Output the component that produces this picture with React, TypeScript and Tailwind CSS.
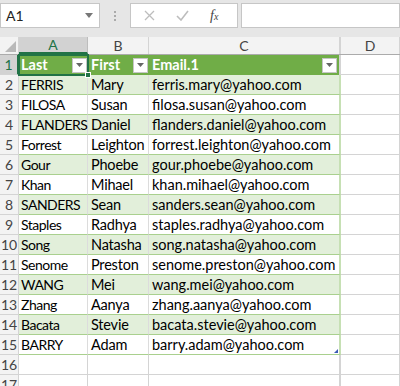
import React from 'react';

const rows: [string, string, string][] = [
  ['FERRIS', 'Mary', 'ferris.mary@yahoo.com'],
  ['FILOSA', 'Susan', 'filosa.susan@yahoo.com'],
  ['FLANDERS', 'Daniel', 'flanders.daniel@yahoo.com'],
  ['Forrest', 'Leighton', 'forrest.leighton@yahoo.com'],
  ['Gour', 'Phoebe', 'gour.phoebe@yahoo.com'],
  ['Khan', 'Mihael', 'khan.mihael@yahoo.com'],
  ['SANDERS', 'Sean', 'sanders.sean@yahoo.com'],
  ['Staples', 'Radhya', 'staples.radhya@yahoo.com'],
  ['Song', 'Natasha', 'song.natasha@yahoo.com'],
  ['Senome', 'Preston', 'senome.preston@yahoo.com'],
  ['WANG', 'Mei', 'wang.mei@yahoo.com'],
  ['Zhang', 'Aanya', 'zhang.aanya@yahoo.com'],
  ['Bacata', 'Stevie', 'bacata.stevie@yahoo.com'],
  ['BARRY', 'Adam', 'barry.adam@yahoo.com'],
];

const FilterButton = () => (
  <div className="w-[15px] h-[15px] bg-white border border-[#c6c6c6] flex items-center justify-center shrink-0">
    <svg width="7" height="4" viewBox="0 0 7 4">
      <path d="M0 0 L7 0 L3.5 4 Z" fill="#666" />
    </svg>
  </div>
);

const RowHead = ({ n, active }: { n: number; active?: boolean }) => (
  <div
    className={`w-[19px] shrink-0 h-full flex items-center justify-center border-r border-b border-[#d4d4d4] text-[14px] ${
      active ? 'bg-[#d2d2d2] text-[#217346] border-r-[#217346] border-r-2' : 'bg-[#f3f3f3] text-[#444]'
    }`}
  >
    {n}
  </div>
);

export default function App() {
  return (
    <div className="w-[400px] h-[386px] overflow-hidden bg-white font-['Lato','Liberation_Sans',sans-serif] text-[14.5px] text-black">
      {/* formula bar */}
      <div className="h-[37px] bg-[#e6e6e6] flex items-start pt-[3px]">
        <div className="w-[100px] h-[25px] bg-white border border-[#c6c6c6] flex items-center pl-[5px] pr-[6px] text-[14px] text-[#222]">
          <span>A1</span>
          <svg className="ml-auto" width="8" height="5" viewBox="0 0 8 5">
            <path d="M0 0 L8 0 L4 5 Z" fill="#777" />
          </svg>
        </div>
        <div className="w-[30px] h-[25px] flex flex-col items-center justify-center gap-[2px]">
          <div className="w-[2px] h-[2px] bg-[#aaa]" />
          <div className="w-[2px] h-[2px] bg-[#aaa]" />
          <div className="w-[2px] h-[2px] bg-[#aaa]" />
        </div>
        <div className="w-[108px] h-[25px] bg-white border border-[#c6c6c6] flex items-center">
          <svg className="ml-[13px]" width="11" height="11" viewBox="0 0 11 11">
            <path d="M1 1 L10 10 M10 1 L1 10" stroke="#bdbdbd" strokeWidth="1.3" />
          </svg>
          <svg className="ml-[21px]" width="13" height="11" viewBox="0 0 13 11">
            <path d="M1 6 L5 10 L12 1" stroke="#bdbdbd" strokeWidth="1.6" fill="none" />
          </svg>
          <span className="ml-[21px] font-['Liberation_Serif',serif] italic text-[14px] text-[#444]">
            f<span className="text-[10px]">x</span>
          </span>
        </div>
        <div className="flex-1 ml-[3px] h-[25px] bg-white border border-[#c6c6c6]" />
      </div>

      {/* column headers */}
      <div className="h-[18px] flex bg-[#f3f3f3] border-b border-[#ababab] text-[14px] text-[#444]">
        <div className="w-[19px] shrink-0 border-r border-[#d4d4d4] flex items-end justify-end p-[2px]">
          <svg width="11" height="11" viewBox="0 0 11 11">
            <path d="M11 0 L11 11 L0 11 Z" fill="#b9b9b9" />
          </svg>
        </div>
        <div className="w-[69px] shrink-0 bg-[#d2d2d2] text-[#217346] border-r border-[#bdbdbd] border-b-2 border-b-[#217346] flex items-center justify-center">
          A
        </div>
        <div className="w-[61px] shrink-0 border-r border-[#d4d4d4] flex items-center justify-center">B</div>
        <div className="w-[192px] shrink-0 border-r-2 border-[#d4d4d4] flex items-center justify-center">C</div>
        <div className="w-[59px] shrink-0 border-r border-[#d4d4d4] flex items-center justify-center">D</div>
      </div>

      {/* header row */}
      <div className="h-[20px] flex">
        <RowHead n={1} active />
        <div className="relative w-[69px] shrink-0 bg-[#70ad47] text-white font-bold flex items-center pl-[2px] pr-[1px]">
          <span>Last</span>
          <div className="ml-auto"><FilterButton /></div>
          <div className="absolute -left-[1px] -top-[1px] -right-[1px] -bottom-[1px] border-2 border-[#217346]" />
          <div className="absolute -right-[3px] -bottom-[3px] w-[6px] h-[6px] bg-[#217346] border border-white" />
        </div>
        <div className="w-[61px] shrink-0 bg-[#70ad47] text-white font-bold flex items-center pl-[3px] pr-[1px]">
          <span>First</span>
          <div className="ml-auto"><FilterButton /></div>
        </div>
        <div className="w-[192px] shrink-0 bg-[#70ad47] text-white font-bold flex items-center pl-[3px] pr-[2px] border-r-2 border-[#d4d4d4]">
          <span>Email.1</span>
          <div className="ml-auto"><FilterButton /></div>
        </div>
        <div className="w-[59px] shrink-0 border-r border-b border-[#d4d4d4]" />
      </div>

      {/* data rows */}
      {rows.map((r, i) => {
        const green = i % 2 === 0;
        const last = i === rows.length - 1;
        const bg = green ? 'bg-[#e2efda]' : 'bg-white';
        return (
          <div key={i} className="h-[20px] flex">
            <RowHead n={i + 2} />
            <div className={`w-[69px] shrink-0 ${bg} border-r border-[#dcdcdc] border-b border-b-[#a9d08e] flex items-center pl-[2px] whitespace-nowrap text-[14px] tracking-[-0.5px]`}>
              {r[0]}
            </div>
            <div className={`w-[61px] shrink-0 ${bg} border-r border-[#dcdcdc] border-b border-b-[#a9d08e] flex items-center pl-[3px] whitespace-nowrap tracking-[-0.2px]`}>
              {r[1]}
            </div>
            <div className={`relative w-[192px] shrink-0 ${bg} border-r-2 border-r-[#c6e0b4] border-b border-b-[#a9d08e] flex items-center pl-[3px] whitespace-nowrap`}>
              {r[2]}
              {last && (
                <svg className="absolute right-[1px] bottom-[1px]" width="4" height="4" viewBox="0 0 4 4">
                  <path d="M4 0 L4 4 L0 4 Z" fill="#3b5bb5" />
                </svg>
              )}
            </div>
            <div className="w-[59px] shrink-0 border-r border-b border-[#d4d4d4]" />
          </div>
        );
      })}

      {/* empty rows */}
      {[16, 17].map(n => (
        <div key={n} className="h-[20px] flex">
          <RowHead n={n} />
          <div className="w-[69px] shrink-0 border-r border-b border-[#d4d4d4]" />
          <div className="w-[61px] shrink-0 border-r border-b border-[#d4d4d4]" />
          <div className="w-[192px] shrink-0 border-r-2 border-b border-[#d4d4d4]" />
          <div className="w-[59px] shrink-0 border-r border-b border-[#d4d4d4]" />
        </div>
      ))}
    </div>
  );
}
